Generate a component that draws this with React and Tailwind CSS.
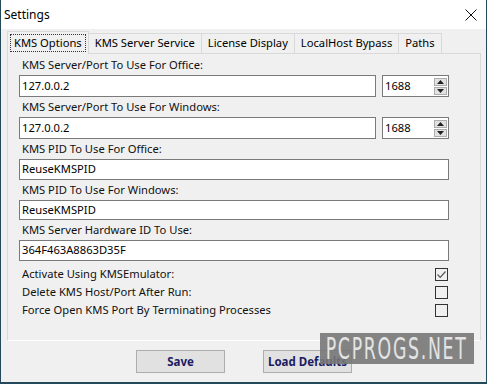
import React from "react";

const font = { fontFamily: '"Noto Sans", "Open Sans", sans-serif' };

const tabs = ["KMS Options", "KMS Server Service", "License Display", "LocalHost Bypass", "Paths"];

const TextBox = ({ value, h = "h-[21px]" }) => (
  <div className={`${h} w-[430px] bg-white border border-[#7a7a7a] flex items-center pl-[2px] text-[11.2px] text-black`}>
    {value}
  </div>
);

const Spinner = () => (
  <div className="flex flex-col gap-[1px] mr-[1px]">
    {["up", "down"].map((d) => (
      <div key={d} className="w-[13px] h-[8px] bg-[#e1e1e1] border border-[#adadad] flex items-center justify-center">
        <svg width="7" height="4" viewBox="0 0 7 4">
          {d === "up" ? <path d="M0 4 L3.5 0 L7 4 Z" fill="#222" /> : <path d="M0 0 L3.5 4 L7 0 Z" fill="#222" />}
        </svg>
      </div>
    ))}
  </div>
);

const PortRow = ({ value }) => (
  <div className="flex items-center h-[22px]">
    <div className="h-[22px] w-[357px] bg-white border border-[#7a7a7a] flex items-center pl-[2px] text-[11.2px]">{value}</div>
    <div className="ml-[6px] h-[22px] w-[67px] bg-white border border-[#7a7a7a] flex items-center justify-between pl-[2px] text-[11.2px]">
      1688
      <Spinner />
    </div>
  </div>
);

const Label = ({ children, h = "h-[20px]" }) => (
  <div className={`${h} flex items-center pl-[3px] text-[11.2px] text-[#111]`}>{children}</div>
);

const CheckRow = ({ label, checked }) => (
  <div className="h-[18px] flex items-center justify-between w-[429px] pl-[3px] text-[11.2px] text-[#111]">
    <span>{label}</span>
    <div className="w-[13px] h-[13px] border border-[#333] bg-[#f0f0f0] flex items-center justify-center">
      {checked && (
        <svg width="11" height="11" viewBox="0 0 11 11">
          <path d="M1.5 5.5 L4.2 8.3 L9.5 2.5" fill="none" stroke="#555" strokeWidth="1.2" />
        </svg>
      )}
    </div>
  </div>
);

export default function App() {
  return (
    <div style={font} className="relative w-[487px] h-[384px] bg-[#f0f0f0] border-l border-r border-b-2 border-[#24495a] flex flex-col overflow-hidden">
      {/* title bar */}
      <div className="h-[29px] bg-white flex items-center justify-between pl-[3px] pr-[9px]">
        <span className="text-[12px] text-black">Settings</span>
        <svg width="12" height="12" viewBox="0 0 12 12">
          <path d="M0.5 0.5 L11.5 11.5 M11.5 0.5 L0.5 11.5" stroke="#111" strokeWidth="1" />
        </svg>
      </div>

      {/* tabs */}
      <div className="flex items-end pl-[6px] h-[23px] mt-[1px]">
        {tabs.map((t, i) =>
          i === 0 ? (
            <div key={t} className="h-[23px] px-[2px] bg-[#f0f0f0] border border-b-0 border-[#d9d9d9] flex items-center relative z-10 -mb-[1px]">
              <span className="border border-dotted border-[#333] px-[3px] leading-[16px] text-[11.2px]">{t}</span>
            </div>
          ) : (
            <div key={t} className="h-[20px] px-[6px] bg-[#f0f0f0] border border-l-0 border-b-0 border-[#d9d9d9] flex items-center text-[11.2px]">
              {t}
            </div>
          )
        )}
      </div>

      {/* panel */}
      <div className="ml-[6px] w-[474px] h-[288px] border border-[#d9d9d9] border-b-white bg-[#f0f0f0] pl-[11px] pt-[2px]">
        <Label h="h-[19px]">KMS Server/Port To Use For Office:</Label>
        <PortRow value="127.0.0.2" />
        <Label>KMS Server/Port To Use For Windows:</Label>
        <PortRow value="127.0.0.2" />
        <Label>KMS PID To Use For Office:</Label>
        <TextBox value="ReuseKMSPID" />
        <Label>KMS PID To Use For Windows:</Label>
        <TextBox value="ReuseKMSPID" h="h-[20px]" />
        <Label>KMS Server Hardware ID To Use:</Label>
        <TextBox value="364F463A8863D35F" />
        <div className="mt-[4px]">
          <CheckRow label="Activate Using KMSEmulator:" checked />
          <CheckRow label="Delete KMS Host/Port After Run:" />
          <CheckRow label="Force Open KMS Port By Terminating Processes" />
        </div>
      </div>

      {/* buttons */}
      <div className="flex pl-[135px] gap-[38px] mt-[9px]">
        <button className="w-[89px] h-[23px] bg-[#e1e1e1] border border-[#adadad] text-[11.5px] font-bold text-[#1b1b63]">Save</button>
        <button className="w-[89px] h-[23px] bg-[#e1e1e1] border border-[#adadad] text-[11.5px] font-bold text-[#1b1b63]">Load Defaults</button>
      </div>

      {/* watermark */}
      <div className="absolute left-[319px] top-[333px] w-[154px] h-[31px] bg-[#777777]/90 flex items-center justify-center overflow-hidden">
        <span
          className="text-[#e4e4e4] text-[31px] tracking-[3px] leading-none scale-x-[0.56] whitespace-nowrap font-medium"
          style={{ fontFamily: '"DejaVu Sans", sans-serif' }}
        >
          PCPROGS.NET
        </span>
      </div>
    </div>
  );
}
